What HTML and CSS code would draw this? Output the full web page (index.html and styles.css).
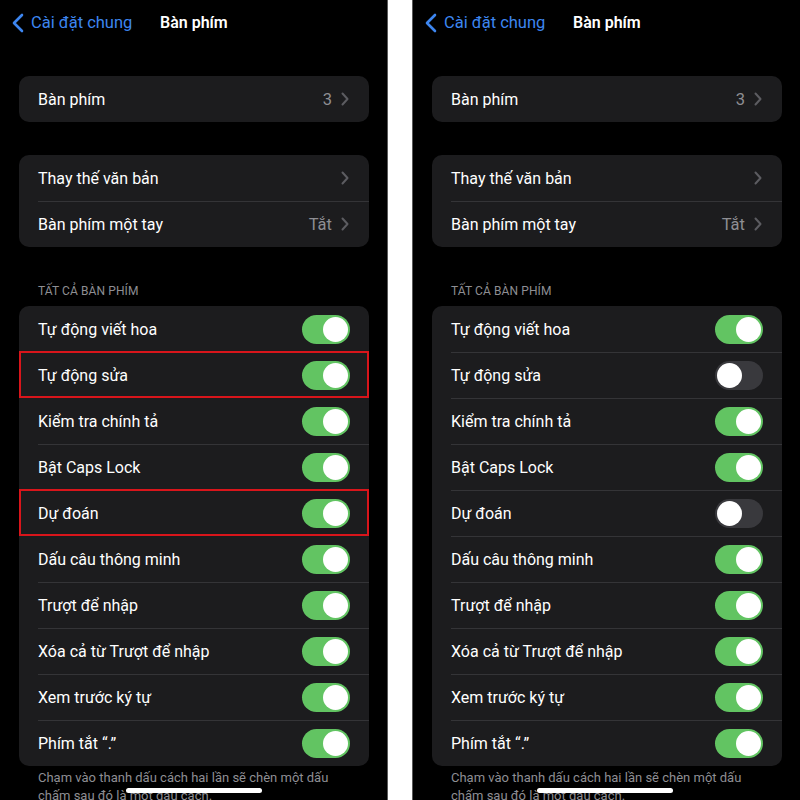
FILE: index.html
```html
<!DOCTYPE html>
<html lang="vi">
<head>
<meta charset="utf-8">
<link rel="stylesheet" href="styles.css">
</head>
<body>
<div class="page">
  <div class="panel panel-left">
    <div class="nav">
      <span class="back"><svg class="back-icon" width="12" height="20" viewBox="0 0 12 20"><polyline points="10,2 2,10 10,18" fill="none" stroke="#3d86f0" stroke-width="2.6" stroke-linecap="round" stroke-linejoin="round"/></svg>Cài đặt chung</span>
      <span class="title">Bàn phím</span>
    </div>
    <div class="card card-first">
      <div class="row"><span class="label">Bàn phím</span><span class="value">3</span><svg class="chev" width="8" height="14" viewBox="0 0 8 14"><polyline points="1.5,1.5 6.5,7 1.5,12.5" fill="none" stroke="#5c5c61" stroke-width="2" stroke-linecap="round" stroke-linejoin="round"/></svg></div>
    </div>
    <div class="card card-second">
      <div class="row"><span class="label">Thay thế văn bản</span><svg class="chev" width="8" height="14" viewBox="0 0 8 14"><polyline points="1.5,1.5 6.5,7 1.5,12.5" fill="none" stroke="#5c5c61" stroke-width="2" stroke-linecap="round" stroke-linejoin="round"/></svg></div>
      <div class="row sep"><span class="label">Bàn phím một tay</span><span class="value">Tắt</span><svg class="chev" width="8" height="14" viewBox="0 0 8 14"><polyline points="1.5,1.5 6.5,7 1.5,12.5" fill="none" stroke="#5c5c61" stroke-width="2" stroke-linecap="round" stroke-linejoin="round"/></svg></div>
    </div>
    <div class="section-header">TẤT CẢ BÀN PHÍM</div>
    <div class="card">
      <div class="row"><span class="label">Tự động viết hoa</span><span class="toggle on"></span></div>
      <div class="row sep marked"><span class="label">Tự động sửa</span><span class="toggle on"></span></div>
      <div class="row"><span class="label">Kiểm tra chính tả</span><span class="toggle on"></span></div>
      <div class="row sep"><span class="label">Bật Caps Lock</span><span class="toggle on"></span></div>
      <div class="row sep marked"><span class="label">Dự đoán</span><span class="toggle on"></span></div>
      <div class="row"><span class="label">Dấu câu thông minh</span><span class="toggle on"></span></div>
      <div class="row sep"><span class="label">Trượt để nhập</span><span class="toggle on"></span></div>
      <div class="row sep"><span class="label">Xóa cả từ Trượt để nhập</span><span class="toggle on"></span></div>
      <div class="row sep"><span class="label">Xem trước ký tự</span><span class="toggle on"></span></div>
      <div class="row sep"><span class="label">Phím tắt “.”</span><span class="toggle on"></span></div>
    </div>
    <div class="footer">Chạm vào thanh dấu cách hai lần sẽ chèn một dấu chấm sau đó là một dấu cách.</div>
    <div class="home-bar"></div>
  </div>
  <div class="panel panel-right">
    <div class="nav">
      <span class="back"><svg class="back-icon" width="12" height="20" viewBox="0 0 12 20"><polyline points="10,2 2,10 10,18" fill="none" stroke="#3d86f0" stroke-width="2.6" stroke-linecap="round" stroke-linejoin="round"/></svg>Cài đặt chung</span>
      <span class="title">Bàn phím</span>
    </div>
    <div class="card card-first">
      <div class="row"><span class="label">Bàn phím</span><span class="value">3</span><svg class="chev" width="8" height="14" viewBox="0 0 8 14"><polyline points="1.5,1.5 6.5,7 1.5,12.5" fill="none" stroke="#5c5c61" stroke-width="2" stroke-linecap="round" stroke-linejoin="round"/></svg></div>
    </div>
    <div class="card card-second">
      <div class="row"><span class="label">Thay thế văn bản</span><svg class="chev" width="8" height="14" viewBox="0 0 8 14"><polyline points="1.5,1.5 6.5,7 1.5,12.5" fill="none" stroke="#5c5c61" stroke-width="2" stroke-linecap="round" stroke-linejoin="round"/></svg></div>
      <div class="row sep"><span class="label">Bàn phím một tay</span><span class="value">Tắt</span><svg class="chev" width="8" height="14" viewBox="0 0 8 14"><polyline points="1.5,1.5 6.5,7 1.5,12.5" fill="none" stroke="#5c5c61" stroke-width="2" stroke-linecap="round" stroke-linejoin="round"/></svg></div>
    </div>
    <div class="section-header">TẤT CẢ BÀN PHÍM</div>
    <div class="card">
      <div class="row"><span class="label">Tự động viết hoa</span><span class="toggle on"></span></div>
      <div class="row sep"><span class="label">Tự động sửa</span><span class="toggle off"></span></div>
      <div class="row sep"><span class="label">Kiểm tra chính tả</span><span class="toggle on"></span></div>
      <div class="row sep"><span class="label">Bật Caps Lock</span><span class="toggle on"></span></div>
      <div class="row sep"><span class="label">Dự đoán</span><span class="toggle off"></span></div>
      <div class="row sep"><span class="label">Dấu câu thông minh</span><span class="toggle on"></span></div>
      <div class="row sep"><span class="label">Trượt để nhập</span><span class="toggle on"></span></div>
      <div class="row sep"><span class="label">Xóa cả từ Trượt để nhập</span><span class="toggle on"></span></div>
      <div class="row sep"><span class="label">Xem trước ký tự</span><span class="toggle on"></span></div>
      <div class="row sep"><span class="label">Phím tắt “.”</span><span class="toggle on"></span></div>
    </div>
    <div class="footer">Chạm vào thanh dấu cách hai lần sẽ chèn một dấu chấm sau đó là một dấu cách.</div>
    <div class="home-bar"></div>
  </div>
</div>
</body>
</html>
```

FILE: styles.css
```css
* { box-sizing: border-box; }
html, body {
  margin: 0;
  padding: 0;
  background: #ffffff;
}
body {
  font-family: Roboto, "Liberation Sans", Arial, sans-serif;
  color: #ffffff;
}
.page {
  display: flex;
  width: 800px;
  height: 800px;
  overflow: hidden;
  justify-content: space-between;
}
.panel {
  position: relative;
  width: 388px;
  height: 800px;
  background: #000000;
  overflow: hidden;
}
.panel-left {
  border-right: 1px solid #5a5a5a;
}
.panel-right {
  border-left: 1px solid #5a5a5a;
}
.nav {
  height: 44px;
  display: flex;
  align-items: center;
  padding-left: 12px;
}
.back {
  display: flex;
  align-items: center;
  color: #3d86f0;
  font-size: 16.5px;
  width: 148px;
}
.back-icon {
  margin-right: 7px;
  margin-top: 2px;
}
.title {
  font-size: 16px;
  font-weight: 600;
  color: #ffffff;
}
.card {
  margin: 0 18px 0 19px;
  background: #1c1c1e;
  border-radius: 10px;
}
.card-first {
  margin-top: 32px;
}
.card-second {
  margin-top: 33px;
}
.row {
  position: relative;
  height: 46px;
  display: flex;
  align-items: center;
  padding: 0 19px 0 19px;
}
.row.sep::before {
  content: "";
  position: absolute;
  left: 19px;
  right: 0;
  top: 0;
  height: 1px;
  background: #343437;
}
.row.marked::after {
  content: "";
  position: absolute;
  left: 0;
  right: 0;
  top: -1px;
  bottom: 0;
  border: 2.5px solid #d9151b;
}
.label {
  flex: 1;
  font-size: 16px;
  color: #ffffff;
}
.value {
  font-size: 16.5px;
  color: #8e8e93;
  margin-right: 9px;
}
.chev {
  margin-right: 1px;
}
.section-header {
  margin: 35px 0 6px 38px;
  font-size: 12px;
  line-height: 18px;
  color: #8e8e93;
  letter-spacing: 0.1px;
}
.toggle {
  position: relative;
  width: 48px;
  height: 29px;
  border-radius: 15px;
  background: #39393d;
}
.toggle::after {
  content: "";
  position: absolute;
  top: 2px;
  width: 25px;
  height: 25px;
  border-radius: 50%;
  background: #ffffff;
}
.toggle.on {
  background: #62c462;
}
.toggle.on::after {
  right: 2px;
}
.toggle.off::after {
  left: 2px;
}
.footer {
  margin: 3px 30px 0 38px;
  font-size: 13px;
  line-height: 18px;
  color: #8e8e93;
}
.home-bar {
  position: absolute;
  left: 126px;
  bottom: 7px;
  width: 136px;
  height: 5px;
  border-radius: 3px;
  background: #ffffff;
}
.panel-right .home-bar {
  left: 124px;
}
```
